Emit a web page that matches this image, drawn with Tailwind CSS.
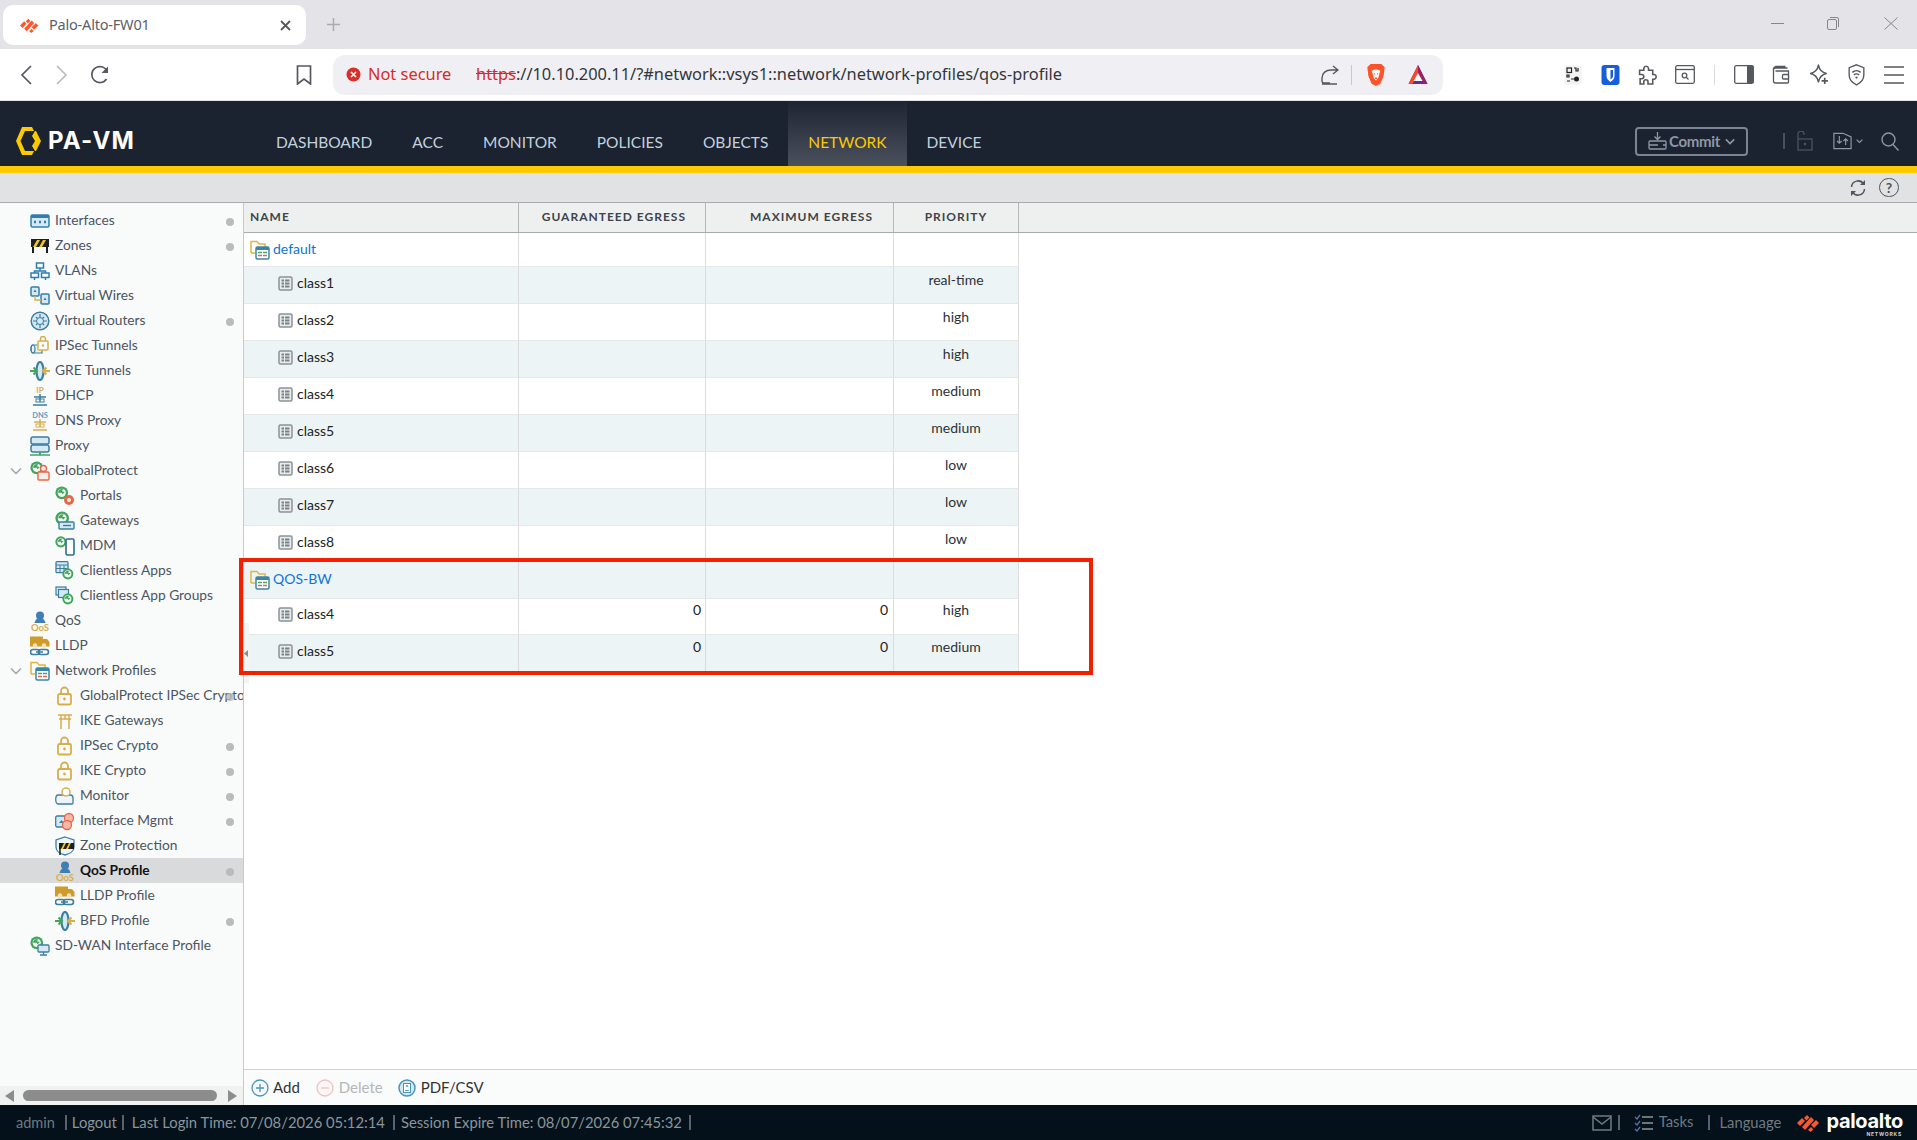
<!DOCTYPE html>
<html>
<head>
<meta charset="utf-8">
<title>Palo-Alto-FW01</title>
<script src="https://cdn.jsdelivr.net/npm/@tailwindcss/browser@4"></script>
</head>
<body class="m-0 overflow-hidden bg-white">
<svg width="0" height="0" class="absolute">
<defs>
<symbol id="pan" viewBox="0 0 24 20"><g fill="#fa582d"><path d="M0 10 5 5l3 3-5 5z"/><path d="M5 14 14 4l3 3-9 10z"/><path d="M7 5 10 2l2.500 2.500-3 3z"/><path d="M12 18l3-3 2.500 2.500-3 2.500z" transform="translate(-1 -1)"/><path d="M14 12l5-5 3 3-5 5z"/></g></symbol>
<symbol id="grid" viewBox="0 0 15 15"><rect x="1" y="1" width="13" height="13" rx="1.500" fill="#e8ecec" stroke="#8b9296" stroke-width="1.500"/><g fill="#7b8286"><rect x="3.500" y="3.500" width="2.500" height="2"/><rect x="7" y="3.500" width="4.500" height="2"/><rect x="3.500" y="6.500" width="2.500" height="2"/><rect x="7" y="6.500" width="4.500" height="2"/><rect x="3.500" y="9.500" width="2.500" height="2"/><rect x="7" y="9.500" width="4.500" height="2"/></g></symbol>
<symbol id="folder" viewBox="0 0 20 20"><path d="M1 13V1.500h6l2 2.500h6v3M1 13h4" fill="none" stroke="#e2b544" stroke-width="1.500"/><rect x="6" y="7" width="13" height="12" rx="1.500" fill="#fff" stroke="#3c85a8" stroke-width="1.500"/><rect x="6" y="7" width="13" height="3" fill="#3c85a8"/><path d="M8 12.500h4M13 12.500h4" stroke="#49a868" stroke-width="1.300"/><path d="M8 15.500h4M13 15.500h4" stroke="#e2675c" stroke-width="1.300"/></symbol>
<symbol id="lock" viewBox="0 0 20 20"><rect x="3" y="8" width="13" height="10.500" rx="1.500" fill="none" stroke="#d8ae4c" stroke-width="1.800"/><path d="M6 8V5a3.500 3.500 0 0 1 7 0v3" fill="none" stroke="#d8ae4c" stroke-width="1.800"/><circle cx="9.500" cy="13" r="1.400" fill="#d8ae4c"/></symbol>
<symbol id="globe" viewBox="0 0 20 20"><circle cx="9" cy="9" r="8.500" fill="#3fa65c"/><circle cx="9" cy="9" r="5.500" fill="#f5f7f5"/><path d="M4 9a5 5 0 0 1 7-4.500L9 7l4 1-3 3-1-2z" fill="#3fa65c"/></symbol>
<symbol id="qos" viewBox="0 0 20 20"><circle cx="10" cy="4.500" r="4" fill="#3f7fb5"/><path d="M4.500 12c1-4 3-5 5.500-5s4.500 1 5.500 5z" fill="#3f7fb5"/><text x="10" y="19.500" text-anchor="middle" font-family="Lato" font-weight="700" font-size="9.500" fill="#d8ae4c">QoS</text></symbol>
<symbol id="truck" viewBox="0 0 20 20"><rect x="0" y="0.500" width="13" height="10" fill="#cf9c2c"/><path d="M13 3h4l2.500 3v4.500H13z" fill="#cf9c2c"/><circle cx="5" cy="9.500" r="2.200" fill="#f2e3b8"/><circle cx="14" cy="9.500" r="2.200" fill="#f2e3b8"/><path d="M3 13.500h4a2 2 0 0 1 0 5H3a2 2 0 0 1 0-5zM11 13.500h5a2 2 0 0 1 0 5h-5a2 2 0 0 1 0-5zM6 16h7" fill="none" stroke="#3c7ea0" stroke-width="1.600"/></symbol>
<symbol id="gre" viewBox="0 0 20 20"><ellipse cx="10" cy="10" rx="3.500" ry="9" fill="#d5e9f4" stroke="#3c7ea0" stroke-width="2.200"/><path d="M0 10h7M3.500 6.500 7 10l-3.500 3.500" fill="none" stroke="#3fa65c" stroke-width="2"/><path d="M20 10h-7M16.500 6.500 13 10l3.500 3.500" fill="none" stroke="#d8ae4c" stroke-width="2"/></symbol>
<symbol id="chev" viewBox="0 0 12 8"><path d="M1 1.500 6 6.500l5-5" fill="none" stroke="#9aa0a4" stroke-width="1.300"/></symbol>
</defs>
</svg>

<div class="w-[1917px] h-[1140px] flex flex-col relative overflow-hidden font-['Lato',sans-serif]">

<!-- Browser tab strip -->
<div class="h-[49px] shrink-0 bg-[#e3e3e8] flex items-start pl-[3px] pt-[5px] font-['Noto_Sans',sans-serif]">
  <div class="w-[303px] h-[40px] bg-white rounded-[10px] flex items-center pl-[17px] pr-[15px] text-[#5c5f66] text-[14.500px]">
    <svg class="w-[20px] h-[17px] shrink-0"><use href="#pan"/></svg>
    <span class="ml-[9px] flex-1 tracking-[-0.2px]">Palo-Alto-FW01</span>
    <svg class="w-[11px] h-[11px]" viewBox="0 0 11 11"><path d="M1 1l9 9M10 1l-9 9" stroke="#56595e" stroke-width="1.800"/></svg>
  </div>
  <svg class="w-[13px] h-[13px] ml-[21px] mt-[13px]" viewBox="0 0 13 13"><path d="M6.500 0v13M0 6.500h13" stroke="#a9abb0" stroke-width="1.500"/></svg>
  <div class="flex-1"></div>
  <div class="flex items-center h-[36px] mr-[19px]">
    <svg class="w-[13px] h-[11px]" viewBox="0 0 13 11"><path d="M0 5.500h13" stroke="#85878c" stroke-width="1"/></svg>
    <svg class="w-[12px] h-[13px] ml-[43px]" viewBox="0 0 12 13"><rect x="0.500" y="2.500" width="9" height="10" rx="1.500" fill="none" stroke="#85878c"/><path d="M3 .5h7a1.500 1.500 0 0 1 1.500 1.500v8" fill="none" stroke="#85878c"/></svg>
    <svg class="w-[14px] h-[13px] ml-[45px]" viewBox="0 0 14 13"><path d="M.5.500l13 12M13.500.500l-13 12" stroke="#85878c" stroke-width="1"/></svg>
  </div>
</div>

<!-- Browser toolbar -->
<div class="h-[52px] shrink-0 bg-white border-b border-[#e3e3e8] flex items-center rounded-t-[6px]">
  <svg class="w-[12px] h-[20px] ml-[20px]" viewBox="0 0 12 20"><path d="M11 1 2 10l9 9" fill="none" stroke="#55585e" stroke-width="1.700"/></svg>
  <svg class="w-[12px] h-[20px] ml-[24px]" viewBox="0 0 12 20"><path d="m1 1 9 9-9 9" fill="none" stroke="#b9bbc0" stroke-width="1.700"/></svg>
  <svg class="w-[20px] h-[20px] ml-[22px]" viewBox="0 0 20 20"><path d="M16.500 14a8 8 0 1 1 .5-8" fill="none" stroke="#55585e" stroke-width="1.700"/><path d="M18 1.500V8h-6.500z" fill="#55585e"/></svg>
  <svg class="w-[16px] h-[20px] ml-[186px]" viewBox="0 0 16 20"><path d="M1.500 1h13v18L8 14l-6.500 5z" fill="none" stroke="#55585e" stroke-width="1.700"/></svg>
  <div class="w-[1110px] h-[40px] ml-[21px] bg-[#f0f0f4] rounded-[12px] flex items-center pl-[13px] font-['Noto_Sans',sans-serif]">
    <svg class="w-[15px] h-[15px] shrink-0" viewBox="0 0 15 15"><circle cx="7.500" cy="7.500" r="7" fill="#d7302b"/><path d="M5 5l5 5M10 5l-5 5" stroke="#fff" stroke-width="1.600"/></svg>
    <span class="ml-[7px] text-[16.400px] text-[#d62b26] w-[108px] shrink-0">Not secure</span>
    <span class="text-[16.400px] text-[#33363b] whitespace-nowrap"><span class="text-[#d62b26] line-through">https</span>://10.10.200.11/?#network::vsys1::network/network-profiles/qos-profile</span>
    <div class="flex-1"></div>
    <svg class="w-[18px] h-[20px]" viewBox="0 0 18 20"><path d="M9 18H3a2 2 0 0 1-2-2v-3c0-5 4-8 9-8h7M12 1l5 4-5 4M1 19h15" fill="none" stroke="#55585e" stroke-width="1.400"/></svg>
    <div class="w-px h-[20px] bg-[#c8c9cd] ml-[12px]"></div>
    <svg class="w-[20px] h-[24px] ml-[14px]" viewBox="0 0 18 22"><path d="M4 1h10l3 3-1 8-3 7-4 2-4-2-3-7-1-8z" fill="#fb542b"/><path d="M5 7l3-1h2l3 1-1 3-1 4-2 2-2-2-1-4z" fill="#fff"/><path d="M7 10h1M10 10h1M8 14h2" stroke="#fb542b" stroke-width="1.200"/></svg>
    <svg class="w-[22px] h-[20px] ml-[21px]" viewBox="0 0 19 20"><path d="M9.500 0 19 19H0z" fill="#662d91"/><path d="M9.500 0 19 19h-4L9.500 8z" fill="#9e1f63"/><path d="M9.500 0 0 19h4L9.500 8z" fill="#ff4724"/><path d="M9.500 8 14 16H5z" fill="#fff"/></svg>
    <div class="w-[14px] shrink-0"></div>
  </div>
  <svg class="w-[20px] h-[20px] ml-[120px]" viewBox="0 0 18 20"><rect x="0.500" y="0.500" width="17" height="19" rx="2" fill="#f2f2f2"/><g fill="none" stroke="#222" stroke-width="1.200"><rect x="3" y="3" width="4.500" height="4.500"/><path d="M10 3h2v3h2V3M3 10h2v2H3zM7 14h3M3 16h3"/></g><circle cx="12.500" cy="14" r="2.500" fill="#222"/></svg>
  <svg class="w-[19px] h-[20px] ml-[18px]" viewBox="0 0 18 20"><rect width="18" height="20" rx="3" fill="#175ddc"/><path d="M5 3h8v8c0 3-2 4.500-4 6-2-1.500-4-3-4-6z" fill="#fff"/><path d="M9 5h2.500v6c0 1.500-1 2.500-2.500 3.500z" fill="#175ddc"/></svg>
  <svg class="w-[20px] h-[21px] ml-[18px]" viewBox="0 0 18 20"><path d="M1 6h4V4a2.300 2.300 0 0 1 4.500 0v2h4v4h1.500a2.300 2.300 0 0 1 0 4.500h-1.500V19H9v-2a2 2 0 0 0-4 0v2H1.500v-5H3a2 2 0 0 0 0-4H1z" fill="none" stroke="#55585e" stroke-width="1.500"/></svg>
  <svg class="w-[20px] h-[19px] ml-[17px]" viewBox="0 0 20 19"><rect x="0.700" y="0.700" width="18.600" height="17.600" rx="1.500" fill="none" stroke="#55585e" stroke-width="1.300"/><path d="M.7 4.500h18.600" stroke="#55585e" stroke-width="1.300"/><circle cx="9.500" cy="10.500" r="2.300" fill="none" stroke="#55585e" stroke-width="1.300"/><path d="m11.500 12.500 2 2" stroke="#55585e" stroke-width="1.300"/></svg>
  <div class="w-px h-[20px] bg-[#dcdce0] ml-[19px]"></div>
  <svg class="w-[20px] h-[19px] ml-[19px]" viewBox="0 0 20 19"><rect x="0.700" y="0.700" width="18.600" height="17.600" rx="1.500" fill="none" stroke="#55585e" stroke-width="1.300"/><rect x="13" y="1" width="6.500" height="17" fill="#55585e"/></svg>
  <svg class="w-[20px] h-[19px] ml-[17px]" viewBox="0 0 17 19"><path d="M15 3H3a2 2 0 0 0-2 2v11a2 2 0 0 0 2 2h12a1 1 0 0 0 1-1V6H3M1 5a3 3 0 0 1 2-3.500h10" fill="none" stroke="#55585e" stroke-width="1.300"/><rect x="10" y="9.500" width="6" height="4.500" rx="1" fill="#fff" stroke="#55585e" stroke-width="1.300"/></svg>
  <svg class="w-[21px] h-[21px] ml-[18px]" viewBox="0 0 18 20"><path d="M8 1c1 5 3 7 7.500 8C11 10 9 12 8 17 7 12 5 10 .5 9 5 8 7 6 8 1z" fill="none" stroke="#55585e" stroke-width="1.400" stroke-linejoin="round"/><path d="M14 13v6M11 16h6" stroke="#55585e" stroke-width="1.600"/></svg>
  <svg class="w-[19px] h-[22px] ml-[17px]" viewBox="0 0 16 21"><path d="M8 .8 15 3.500v7c0 4.500-3 7.500-7 9.500-4-2-7-5-7-9.500v-7z" fill="none" stroke="#55585e" stroke-width="1.300"/><path d="M4 8a6 6 0 0 1 8 0M5.500 10.500a3.500 3.500 0 0 1 5 0" fill="none" stroke="#55585e" stroke-width="1.300"/><circle cx="8" cy="13" r="1.100" fill="#55585e"/></svg>
  <svg class="w-[20px] h-[18px] ml-[18px]" viewBox="0 0 20 18"><path d="M0 1h20M0 9h20M0 17h20" stroke="#55585e" stroke-width="1.300"/></svg>
</div>

<!-- App header -->
<div class="h-[65px] shrink-0 bg-[#1b2230] flex items-center pl-[16px] relative">
  <svg class="w-[25px] h-[28px] mt-[14px]" viewBox="0 0 25 28"><path d="M6 0h10l2 4H9L4.500 14 9 24h9l-2 4H6L0 14z" fill="#fdc900"/><path d="M19 4h1l5 10-5 10h-1l-3-5 3-5-3-5z" fill="#fdc900"/></svg>
  <span class="ml-[7px] mt-[14px] w-[208px] shrink-0 text-white font-['Inter',sans-serif] font-bold text-[24px] tracking-[1.200px] leading-none">PA-VM</span>
  <div class="flex h-full text-[15.500px] text-[#c2d1de] items-stretch">
    <div class="px-[20px] flex items-center pt-[18px]">DASHBOARD</div>
    <div class="px-[20px] flex items-center pt-[18px]">ACC</div>
    <div class="px-[20px] flex items-center pt-[18px]">MONITOR</div>
    <div class="px-[20px] flex items-center pt-[18px]">POLICIES</div>
    <div class="px-[20px] flex items-center pt-[18px]">OBJECTS</div>
    <div class="px-[20px] flex items-center pt-[18px] bg-linear-to-b from-[#1e2532] to-[#4b525d] text-[#fdc900]">NETWORK</div>
    <div class="px-[20px] flex items-center pt-[18px]">DEVICE</div>
  </div>
  <div class="flex-1"></div>
  <div class="flex items-center mt-[15px] pr-[17px]">
    <div class="w-[113px] h-[29px] border-2 border-[#7a8494] rounded-[4px] flex items-center justify-center text-[#8d98a7] font-bold text-[15px]">
      <svg class="w-[19px] h-[18px]" viewBox="0 0 19 18"><path d="M9.500 0v7M6.500 4.500l3 3 3-3" fill="none" stroke="#8d98a7" stroke-width="1.300"/><rect x="1" y="9" width="17" height="8" rx="1" fill="none" stroke="#8d98a7" stroke-width="1.300"/><path d="M1 13h9M15 13h3" stroke="#8d98a7" stroke-width="1.300"/></svg>
      <span class="ml-[2px] tracking-[-0.3px]">Commit</span>
      <svg class="w-[10px] h-[7px] ml-[5px]" viewBox="0 0 12 8"><path d="M1 1.500 6 6.500l5-5" fill="none" stroke="#8d98a7" stroke-width="2"/></svg>
    </div>
    <div class="w-[2px] h-[16px] bg-[#48505e] ml-[35px]"></div>
    <svg class="w-[20px] h-[20px] ml-[10px]" viewBox="0 0 16 20"><rect x="1" y="8" width="14" height="11" fill="none" stroke="#4a5361" stroke-width="1.300"/><path d="M1 8V3a3 3 0 0 1 6 0v1" fill="none" stroke="#4a5361" stroke-width="1.300"/><circle cx="8" cy="13" r="1.300" fill="#4a5361"/></svg>
    <svg class="w-[19px] h-[18px] ml-[18px]" viewBox="0 0 21 19"><path d="M1 1h10l9 4v13H1z" fill="none" stroke="#8d98a7" stroke-width="1.300"/><path d="M7 4v8M4.500 9.500 7 12l2.500-2.500M14 14V7M11.500 9.500 14 7l2.500 2.500" fill="none" stroke="#8d98a7" stroke-width="1.300"/></svg>
    <svg class="w-[7px] h-[6px] ml-[4px]" viewBox="0 0 12 8"><path d="M1 1.500 6 6.500l5-5" fill="none" stroke="#8d98a7" stroke-width="2"/></svg>
    <svg class="w-[20px] h-[19px] ml-[17px]" viewBox="0 0 18 19"><circle cx="7.500" cy="7.500" r="6.500" fill="none" stroke="#8d98a7" stroke-width="1.400"/><path d="m12 12.500 5.500 6" stroke="#8d98a7" stroke-width="1.400"/></svg>
  </div>
</div>
<div class="h-[7px] shrink-0 bg-[#fdc900]"></div>

<!-- Sub bar -->
<div class="h-[30px] shrink-0 bg-[#e1e2e4] border-b border-[#a9abad] flex items-center justify-end pr-[18px]">
  <svg class="w-[18px] h-[18px]" viewBox="0 0 17 18"><path d="M2 8a6.500 6.500 0 0 1 12-3M15 10A6.500 6.500 0 0 1 3 13" fill="none" stroke="#4f5458" stroke-width="1.500"/><path d="M15.500 1v5h-5zM1.500 17v-5h5z" fill="#4f5458"/></svg>
  <div class="w-[20px] h-[19px] ml-[12px] rounded-full border-[1.500px] border-[#4f5458] flex items-center justify-center text-[14px] font-bold text-[#4f5458]">?</div>
</div>

<!-- Main -->
<div class="flex-1 flex min-h-0">
  <!-- Sidebar -->
  <div class="w-[244px] shrink-0 bg-[#f9fafa] border-r border-[#c9cbcc] flex flex-col">
    <div class="flex-1 pt-[5px] text-[13.750px] text-[#4b5563] overflow-hidden">
      <div class="h-[25px] flex items-center pl-[30px] relative"><svg class="w-[20px] h-[15px]" viewBox="0 0 20 15"><rect x="1" y="2" width="18" height="12" rx="1.500" fill="#d5e9f4" stroke="#2f7fae" stroke-width="1.500"/><rect x="1" y="2" width="18" height="3" fill="#2f7fae"/><path d="M4 9h2M9 9h2M14 9h2" stroke="#2f7fae" stroke-width="2.500"/></svg><span class="ml-[5px]">Interfaces</span><i class="absolute right-[9px] top-[10px] w-[8px] h-[8px] rounded-full bg-[#b9bbbc]"></i></div>
      <div class="h-[25px] flex items-center pl-[30px] relative"><svg class="w-[20px] h-[15px]" viewBox="0 0 20 15"><path d="M1 1h18v8H1z" fill="#1e1e1e"/><path d="M3 9 7 2h3L6 9zM9 9l4-7h3l-4 7z" fill="#f2c81e"/><path d="M3 9v6M17 9v6" stroke="#1e1e1e" stroke-width="2"/></svg><span class="ml-[5px]">Zones</span><i class="absolute right-[9px] top-[10px] w-[8px] h-[8px] rounded-full bg-[#b9bbbc]"></i></div>
      <div class="h-[25px] flex items-center pl-[30px]"><svg class="w-[20px] h-[18px]" viewBox="0 0 20 18"><g fill="none" stroke="#2f7fae" stroke-width="1.500"><rect x="6.500" y="1" width="7" height="5"/><rect x="1" y="11" width="7.500" height="4.500"/><rect x="11.500" y="11" width="7.500" height="4.500"/><path d="M10 6v3M4.500 11V9h11v2M4.500 15.500V18M15.500 15.500V18"/></g></svg><span class="ml-[5px]">VLANs</span></div>
      <div class="h-[25px] flex items-center pl-[30px]"><svg class="w-[20px] h-[19px]" viewBox="0 0 20 19"><rect x="1" y="1" width="8" height="9" rx="1" fill="#d5e9f4" stroke="#2f7fae" stroke-width="1.500"/><rect x="11" y="8" width="8" height="10" rx="1" fill="#d5e9f4" stroke="#2f7fae" stroke-width="1.500"/><path d="M5 10v4h6" fill="none" stroke="#d8ae4c" stroke-width="1.300"/><path d="M3.500 6 5 3.500 6.500 6zM13.500 14l1.500-2.500 1.500 2.500z" fill="#2f7fae"/></svg><span class="ml-[5px]">Virtual Wires</span></div>
      <div class="h-[25px] flex items-center pl-[30px] relative"><svg class="w-[20px] h-[20px]" viewBox="0 0 20 20"><circle cx="10" cy="10" r="8.800" fill="#d5e9f4" stroke="#3c7ea0" stroke-width="1.500"/><path d="M10 3v14M3 10h14M6 6l8 8M14 6l-8 8" stroke="#3c7ea0" stroke-width="1.200"/><circle cx="10" cy="10" r="3.500" fill="#d5e9f4" stroke="#3c7ea0"/></svg><span class="ml-[5px]">Virtual Routers</span><i class="absolute right-[9px] top-[10px] w-[8px] h-[8px] rounded-full bg-[#b9bbbc]"></i></div>
      <div class="h-[25px] flex items-center pl-[30px]"><svg class="w-[20px] h-[19px]" viewBox="0 0 20 19"><path d="M3 9h9v8H3a2 4 0 0 1 0-8z" fill="#e9f2f6" stroke="#3c7ea0" stroke-width="1.200"/><ellipse cx="3" cy="13" rx="2" ry="4" fill="none" stroke="#3c7ea0" stroke-width="1.200"/><rect x="8" y="5" width="10" height="9" rx="1" fill="#fff" stroke="#d8ae4c" stroke-width="1.500"/><path d="M10.500 5V3a2.500 2.500 0 0 1 5 0v2" fill="none" stroke="#d8ae4c" stroke-width="1.500"/><circle cx="13" cy="9.500" r="1.200" fill="#d8ae4c"/></svg><span class="ml-[5px]">IPSec Tunnels</span></div>
      <div class="h-[25px] flex items-center pl-[30px]"><svg class="w-[20px] h-[20px]"><use href="#gre"/></svg><span class="ml-[5px]">GRE Tunnels</span></div>
      <div class="h-[25px] flex items-center pl-[30px]"><svg class="w-[20px] h-[20px]" viewBox="0 0 20 20"><text x="10" y="7" text-anchor="middle" font-family="Lato" font-weight="700" font-size="8" fill="#d8ae4c">IP</text><path d="M10 8v8M4 11h12M3 19h14" stroke="#3c7ea0" stroke-width="1.500"/><rect x="6" y="13" width="8" height="3" fill="none" stroke="#3c7ea0"/></svg><span class="ml-[5px]">DHCP</span></div>
      <div class="h-[25px] flex items-center pl-[30px]"><svg class="w-[20px] h-[20px]" viewBox="0 0 20 20"><text x="10" y="7" text-anchor="middle" font-family="Lato" font-weight="700" font-size="7.500" fill="#5b9fca">DNS</text><path d="M10 8v8M4 11h12M3 19h14" stroke="#d8ae4c" stroke-width="1.500"/><rect x="6" y="13" width="8" height="3" fill="none" stroke="#d8ae4c"/></svg><span class="ml-[5px]">DNS Proxy</span></div>
      <div class="h-[25px] flex items-center pl-[30px]"><svg class="w-[20px] h-[20px]" viewBox="0 0 20 20"><rect x="1" y="1" width="18" height="7" rx="2" fill="#d5e9f4" stroke="#3c7ea0" stroke-width="1.500"/><rect x="1" y="9" width="18" height="7" rx="2" fill="#d5e9f4" stroke="#3c7ea0" stroke-width="1.500"/><path d="M0 19h20" stroke="#3fa65c" stroke-width="1.500"/><path d="M10 16v3" stroke="#3fa65c" stroke-width="2"/></svg><span class="ml-[5px]">Proxy</span></div>
      <div class="h-[25px] flex items-center pl-[10px]"><svg class="w-[12px] h-[8px]"><use href="#chev"/></svg><svg class="w-[20px] h-[20px] ml-[8px]" viewBox="0 0 20 20"><use href="#globe" width="15" height="15"/><rect x="8" y="11" width="11" height="8" rx="1" fill="#fbeee8" stroke="#e8674b" stroke-width="1.400"/><circle cx="13.500" cy="7.500" r="3" fill="#fbeee8" stroke="#e8674b" stroke-width="1.400"/></svg><span class="ml-[5px]">GlobalProtect</span></div>
      <div class="h-[25px] flex items-center pl-[55px]"><svg class="w-[20px] h-[20px]" viewBox="0 0 20 20"><use href="#globe" width="15" height="15"/><circle cx="14" cy="14" r="5" fill="#e8674b"/><circle cx="14" cy="14" r="2" fill="#fbeee8"/></svg><span class="ml-[5px]">Portals</span></div>
      <div class="h-[25px] flex items-center pl-[55px]"><svg class="w-[20px] h-[20px]" viewBox="0 0 20 20"><use href="#globe" width="16" height="16"/><rect x="4" y="11" width="15" height="7" rx="1" fill="#d5e9f4" stroke="#3c7ea0" stroke-width="1.400"/><path d="M8 14.500h8" stroke="#3c7ea0" stroke-width="1.400"/></svg><span class="ml-[5px]">Gateways</span></div>
      <div class="h-[25px] flex items-center pl-[55px]"><svg class="w-[20px] h-[20px]" viewBox="0 0 20 20"><use href="#globe" width="13" height="13"/><rect x="11" y="3" width="8" height="16" rx="1.500" fill="#fff" stroke="#2a6d94" stroke-width="1.600"/></svg><span class="ml-[5px]">MDM</span></div>
      <div class="h-[25px] flex items-center pl-[55px]"><svg class="w-[20px] h-[20px]" viewBox="0 0 20 20"><rect x="1" y="0.700" width="12" height="11" rx="1" fill="#d5e9f4" stroke="#3c7ea0" stroke-width="1.300"/><path d="M1 4h12M5 4v7M9 4v7M1 7.500h12" stroke="#3c7ea0"/><use href="#globe" x="7" y="7" width="13" height="13"/></svg><span class="ml-[5px]">Clientless Apps</span></div>
      <div class="h-[25px] flex items-center pl-[55px]"><svg class="w-[20px] h-[20px]" viewBox="0 0 20 20"><rect x="1" y="1" width="10" height="8" fill="#d5e9f4" stroke="#3c7ea0" stroke-width="1.200"/><rect x="3.500" y="3.500" width="10" height="8" fill="#d5e9f4" stroke="#3c7ea0" stroke-width="1.200"/><use href="#globe" x="7" y="7" width="13" height="13"/></svg><span class="ml-[5px]">Clientless App Groups</span></div>
      <div class="h-[25px] flex items-center pl-[30px]"><svg class="w-[20px] h-[20px]"><use href="#qos"/></svg><span class="ml-[5px]">QoS</span></div>
      <div class="h-[25px] flex items-center pl-[30px]"><svg class="w-[20px] h-[20px]"><use href="#truck"/></svg><span class="ml-[5px]">LLDP</span></div>
      <div class="h-[25px] flex items-center pl-[10px]"><svg class="w-[12px] h-[8px]"><use href="#chev"/></svg><svg class="w-[20px] h-[20px] ml-[8px]"><use href="#folder"/></svg><span class="ml-[5px]">Network Profiles</span></div>
      <div class="h-[25px] flex items-center pl-[55px] relative whitespace-nowrap overflow-hidden"><svg class="w-[20px] h-[20px] shrink-0"><use href="#lock"/></svg><span class="ml-[5px]">GlobalProtect IPSec Crypto</span><i class="absolute right-[9px] top-[10px] w-[8px] h-[8px] rounded-full bg-[#b9bbbc]/80"></i></div>
      <div class="h-[25px] flex items-center pl-[55px]"><svg class="w-[20px] h-[20px]" viewBox="0 0 20 20"><path d="M3 4h14M4 8h12M6 4v14M14 4v14M10 4v4" fill="none" stroke="#d8ae4c" stroke-width="1.500"/></svg><span class="ml-[5px]">IKE Gateways</span></div>
      <div class="h-[25px] flex items-center pl-[55px] relative"><svg class="w-[20px] h-[20px]"><use href="#lock"/></svg><span class="ml-[5px]">IPSec Crypto</span><i class="absolute right-[9px] top-[10px] w-[8px] h-[8px] rounded-full bg-[#b9bbbc]"></i></div>
      <div class="h-[25px] flex items-center pl-[55px] relative"><svg class="w-[20px] h-[20px]"><use href="#lock"/></svg><span class="ml-[5px]">IKE Crypto</span><i class="absolute right-[9px] top-[10px] w-[8px] h-[8px] rounded-full bg-[#b9bbbc]"></i></div>
      <div class="h-[25px] flex items-center pl-[55px] relative"><svg class="w-[20px] h-[20px]" viewBox="0 0 20 20"><path d="M3 9h12a3 3 0 0 1 3 3v5a1 1 0 0 1-1 1H3a2 4 0 0 1 0-9z" fill="#eef5f8" stroke="#3c7ea0" stroke-width="1.300"/><circle cx="11" cy="6" r="4" fill="#fff" stroke="#d8ae4c" stroke-width="1.500"/></svg><span class="ml-[5px]">Monitor</span><i class="absolute right-[9px] top-[10px] w-[8px] h-[8px] rounded-full bg-[#b9bbbc]"></i></div>
      <div class="h-[25px] flex items-center pl-[55px] relative"><svg class="w-[20px] h-[20px]" viewBox="0 0 20 20"><rect x="0.700" y="5" width="12" height="11" rx="1.500" fill="#d5e9f4" stroke="#3c7ea0" stroke-width="1.300"/><path d="M4 12l2.500-3L9 12z" fill="#3c7ea0"/><circle cx="14" cy="7" r="4.500" fill="#f4b9a6" stroke="#e8674b" stroke-width="1.300"/><circle cx="12" cy="14" r="4.500" fill="#f4b9a6" stroke="#e8674b" stroke-width="1.300"/></svg><span class="ml-[5px]">Interface Mgmt</span><i class="absolute right-[9px] top-[10px] w-[8px] h-[8px] rounded-full bg-[#b9bbbc]"></i></div>
      <div class="h-[25px] flex items-center pl-[55px]"><svg class="w-[20px] h-[20px]" viewBox="0 0 20 20"><path d="M10 1 19 4v7c0 4-4 7-9 8-5-1-9-4-9-8V4z" fill="#eef5f8" stroke="#3c7ea0" stroke-width="1.300"/><path d="M4 7h15v6H4z" fill="#1e1e1e"/><path d="M6 13l3-6h2l-3 6zM11 13l3-6h2l-3 6z" fill="#f2c81e"/><path d="M5 13v6" stroke="#1e1e1e" stroke-width="1.500"/></svg><span class="ml-[5px]">Zone Protection</span></div>
      <div class="h-[25px] flex items-center pl-[55px] relative bg-[#d9dadc] text-[#111] font-bold"><svg class="w-[20px] h-[20px]"><use href="#qos"/></svg><span class="ml-[5px]">QoS Profile</span><i class="absolute right-[9px] top-[10px] w-[8px] h-[8px] rounded-full bg-[#b9bbbc]"></i></div>
      <div class="h-[25px] flex items-center pl-[55px]"><svg class="w-[20px] h-[20px]"><use href="#truck"/></svg><span class="ml-[5px]">LLDP Profile</span></div>
      <div class="h-[25px] flex items-center pl-[55px] relative"><svg class="w-[20px] h-[20px]"><use href="#gre"/></svg><span class="ml-[5px]">BFD Profile</span><i class="absolute right-[9px] top-[10px] w-[8px] h-[8px] rounded-full bg-[#b9bbbc]"></i></div>
      <div class="h-[25px] flex items-center pl-[30px]"><svg class="w-[20px] h-[20px]" viewBox="0 0 20 20"><use href="#globe" width="15" height="15"/><rect x="8" y="9" width="11" height="7" rx="1" fill="#d5e9f4" stroke="#3c7ea0" stroke-width="1.300"/><path d="M13.500 16v3M10 19h7" stroke="#3c7ea0" stroke-width="1.300"/></svg><span class="ml-[5px]">SD-WAN Interface Profile</span></div>
    </div>
    <div class="h-[19px] shrink-0 bg-[#f0f1f1] flex items-center pl-[5px]">
      <svg class="w-[9px] h-[12px]" viewBox="0 0 9 12"><path d="M9 0v12L0 6z" fill="#8c8c8c"/></svg>
      <div class="w-[194px] h-[11px] ml-[9px] rounded-full bg-[#8c8c8c]"></div>
      <svg class="w-[9px] h-[12px] ml-[11px]" viewBox="0 0 9 12"><path d="M0 0v12l9-6z" fill="#8c8c8c"/></svg>
    </div>
  </div>

  <!-- Content -->
  <div class="flex-1 flex flex-col min-w-0 relative">
    <div class="h-[30px] shrink-0 bg-[#eef0f0] border-b border-[#a9abad] flex">
      <div class="w-[775px] grid grid-cols-[275px_187px_188px_125px] text-[12px] font-bold tracking-[1px] text-[#3f4448]">
        <div class="border-r border-[#b4b6b8] flex items-center pl-[6px] pb-[2px] h-full">NAME</div>
        <div class="border-r border-[#b4b6b8] flex items-center justify-end pr-[19px] pb-[2px] h-full">GUARANTEED EGRESS</div>
        <div class="border-r border-[#b4b6b8] flex items-center justify-end pr-[20px] pb-[2px] h-full">MAXIMUM EGRESS</div>
        <div class="border-r border-[#b4b6b8] flex items-center justify-center pb-[2px] h-full">PRIORITY</div>
      </div>
    </div>
    <div class="flex-1 bg-white text-[14px] text-[#222]">
      <div class="w-[775px] grid grid-cols-[275px_187px_188px_125px] grid-rows-[33px_repeat(8,37px)_36px_36px_37px]">
        <!-- default -->
        <div class="flex items-center pl-[6px] pb-[2px] border-r border-[#dcdcdc]"><svg class="w-[20px] h-[20px] mt-[2px]"><use href="#folder"/></svg><a class="ml-[3px] text-[#0f74d6]">default</a></div><div class="border-r border-[#dcdcdc]"></div><div class="border-r border-[#dcdcdc]"></div><div class="border-r border-[#dcdcdc]"></div>
        <!-- class rows -->
        <div class="bg-[#edf4f6] border-t border-[#e6e8e8] border-r border-r-[#dcdcdc] flex items-center pl-[34px] pb-[6px]"><svg class="w-[15px] h-[15px] mt-[2px]"><use href="#grid"/></svg><span class="ml-[4px]">class1</span></div><div class="bg-[#edf4f6] border-t border-[#e6e8e8] border-r border-r-[#dcdcdc]"></div><div class="bg-[#edf4f6] border-t border-[#e6e8e8] border-r border-r-[#dcdcdc]"></div><div class="bg-[#edf4f6] border-t border-[#e6e8e8] border-r border-r-[#dcdcdc] text-center pt-[2px] text-[#2a3338]">real-time</div>
        <div class="border-t border-[#e6e8e8] border-r border-r-[#dcdcdc] flex items-center pl-[34px] pb-[6px]"><svg class="w-[15px] h-[15px] mt-[2px]"><use href="#grid"/></svg><span class="ml-[4px]">class2</span></div><div class="border-t border-[#e6e8e8] border-r border-r-[#dcdcdc]"></div><div class="border-t border-[#e6e8e8] border-r border-r-[#dcdcdc]"></div><div class="border-t border-[#e6e8e8] border-r border-r-[#dcdcdc] text-center pt-[2px] text-[#2a3338]">high</div>
        <div class="bg-[#edf4f6] border-t border-[#e6e8e8] border-r border-r-[#dcdcdc] flex items-center pl-[34px] pb-[6px]"><svg class="w-[15px] h-[15px] mt-[2px]"><use href="#grid"/></svg><span class="ml-[4px]">class3</span></div><div class="bg-[#edf4f6] border-t border-[#e6e8e8] border-r border-r-[#dcdcdc]"></div><div class="bg-[#edf4f6] border-t border-[#e6e8e8] border-r border-r-[#dcdcdc]"></div><div class="bg-[#edf4f6] border-t border-[#e6e8e8] border-r border-r-[#dcdcdc] text-center pt-[2px] text-[#2a3338]">high</div>
        <div class="border-t border-[#e6e8e8] border-r border-r-[#dcdcdc] flex items-center pl-[34px] pb-[6px]"><svg class="w-[15px] h-[15px] mt-[2px]"><use href="#grid"/></svg><span class="ml-[4px]">class4</span></div><div class="border-t border-[#e6e8e8] border-r border-r-[#dcdcdc]"></div><div class="border-t border-[#e6e8e8] border-r border-r-[#dcdcdc]"></div><div class="border-t border-[#e6e8e8] border-r border-r-[#dcdcdc] text-center pt-[2px] text-[#2a3338]">medium</div>
        <div class="bg-[#edf4f6] border-t border-[#e6e8e8] border-r border-r-[#dcdcdc] flex items-center pl-[34px] pb-[6px]"><svg class="w-[15px] h-[15px] mt-[2px]"><use href="#grid"/></svg><span class="ml-[4px]">class5</span></div><div class="bg-[#edf4f6] border-t border-[#e6e8e8] border-r border-r-[#dcdcdc]"></div><div class="bg-[#edf4f6] border-t border-[#e6e8e8] border-r border-r-[#dcdcdc]"></div><div class="bg-[#edf4f6] border-t border-[#e6e8e8] border-r border-r-[#dcdcdc] text-center pt-[2px] text-[#2a3338]">medium</div>
        <div class="border-t border-[#e6e8e8] border-r border-r-[#dcdcdc] flex items-center pl-[34px] pb-[6px]"><svg class="w-[15px] h-[15px] mt-[2px]"><use href="#grid"/></svg><span class="ml-[4px]">class6</span></div><div class="border-t border-[#e6e8e8] border-r border-r-[#dcdcdc]"></div><div class="border-t border-[#e6e8e8] border-r border-r-[#dcdcdc]"></div><div class="border-t border-[#e6e8e8] border-r border-r-[#dcdcdc] text-center pt-[2px] text-[#2a3338]">low</div>
        <div class="bg-[#edf4f6] border-t border-[#e6e8e8] border-r border-r-[#dcdcdc] flex items-center pl-[34px] pb-[6px]"><svg class="w-[15px] h-[15px] mt-[2px]"><use href="#grid"/></svg><span class="ml-[4px]">class7</span></div><div class="bg-[#edf4f6] border-t border-[#e6e8e8] border-r border-r-[#dcdcdc]"></div><div class="bg-[#edf4f6] border-t border-[#e6e8e8] border-r border-r-[#dcdcdc]"></div><div class="bg-[#edf4f6] border-t border-[#e6e8e8] border-r border-r-[#dcdcdc] text-center pt-[2px] text-[#2a3338]">low</div>
        <div class="border-t border-[#e6e8e8] border-r border-r-[#dcdcdc] flex items-center pl-[34px] pb-[6px]"><svg class="w-[15px] h-[15px] mt-[2px]"><use href="#grid"/></svg><span class="ml-[4px]">class8</span></div><div class="border-t border-[#e6e8e8] border-r border-r-[#dcdcdc]"></div><div class="border-t border-[#e6e8e8] border-r border-r-[#dcdcdc]"></div><div class="border-t border-[#e6e8e8] border-r border-r-[#dcdcdc] text-center pt-[2px] text-[#2a3338]">low</div>
        <!-- QOS-BW -->
        <div class="bg-[#edf4f6] flex items-center pl-[6px] pb-[3px] border-r border-[#dcdcdc]"><svg class="w-[20px] h-[20px] mt-[2px]"><use href="#folder"/></svg><a class="ml-[3px] text-[#0f74d6]">QOS-BW</a></div><div class="bg-[#edf4f6] border-r border-[#dcdcdc]"></div><div class="bg-[#edf4f6] border-r border-[#dcdcdc]"></div><div class="bg-[#edf4f6] border-r border-[#dcdcdc]"></div>
        <div class="border-t border-[#e6e8e8] border-r border-r-[#dcdcdc] flex items-center pl-[34px] pb-[6px]"><svg class="w-[15px] h-[15px] mt-[2px]"><use href="#grid"/></svg><span class="ml-[4px]">class4</span></div><div class="border-t border-[#e6e8e8] border-r border-r-[#dcdcdc] text-right pr-[4px]">0</div><div class="border-t border-[#e6e8e8] border-r border-r-[#dcdcdc] text-right pr-[5px]">0</div><div class="border-t border-[#e6e8e8] border-r border-r-[#dcdcdc] text-center text-[#2a3338]">high</div>
        <div class="bg-[#edf4f6] border-t border-[#e6e8e8] border-r border-r-[#dcdcdc] flex items-center pl-[34px] pb-[5px]"><svg class="w-[15px] h-[15px] mt-[2px]"><use href="#grid"/></svg><span class="ml-[4px]">class5</span></div><div class="bg-[#edf4f6] border-t border-[#e6e8e8] border-r border-r-[#dcdcdc] text-right pr-[4px] pt-[1px]">0</div><div class="bg-[#edf4f6] border-t border-[#e6e8e8] border-r border-r-[#dcdcdc] text-right pr-[5px] pt-[1px]">0</div><div class="bg-[#edf4f6] border-t border-[#e6e8e8] border-r border-r-[#dcdcdc] text-center pt-[1px] text-[#2a3338]">medium</div>
      </div>
    </div>
    <!-- Action bar -->
    <div class="h-[36px] shrink-0 bg-[#fafbfb] border-t border-[#d0d2d3] flex items-center pl-[7px] text-[15px] text-[#333]">
      <svg class="w-[18px] h-[18px]" viewBox="0 0 18 18"><circle cx="9" cy="9" r="8" fill="#f3f8fb" stroke="#4e93b8" stroke-width="1.300"/><path d="M9 5v8M5 9h8" stroke="#4e93b8" stroke-width="1.300"/></svg>
      <span class="ml-[4px]">Add</span>
      <svg class="w-[18px] h-[18px] ml-[16px]" viewBox="0 0 18 18"><circle cx="9" cy="9" r="8" fill="#fdf6f5" stroke="#eec4bf" stroke-width="1.300"/><path d="M5 9h8" stroke="#eec4bf" stroke-width="1.300"/></svg>
      <span class="ml-[5px] text-[#b4b7b9]">Delete</span>
      <svg class="w-[18px] h-[18px] ml-[15px]" viewBox="0 0 18 18"><circle cx="9" cy="9" r="8" fill="#d5e9f4" stroke="#4e93b8" stroke-width="1.500"/><rect x="5.500" y="4.500" width="7" height="9" fill="#fff" stroke="#4e93b8"/><path d="M7 11.500h4M8 8l1-2 1 2" fill="none" stroke="#4e93b8" stroke-width=".9"/></svg>
      <span class="ml-[5px]">PDF/CSV</span>
    </div>
    <!-- Collapse handle -->
    <div class="absolute left-0 top-[420px] w-[5px] h-[60px] bg-[#f3f4f4] flex items-center">
      <svg class="w-[4px] h-[7px]" viewBox="0 0 4 7"><path d="M4 0v7L0 3.500z" fill="#8c8c8c"/></svg>
    </div>
    <!-- Red highlight -->
    <div class="absolute left-[-5px] top-[355px] w-[854px] h-[117px] border-[4px] border-[#f02000]"></div>
  </div>
</div>

<!-- Status bar -->
<div class="h-[35px] shrink-0 bg-[#04111a] flex items-center pl-[16px] text-[14.800px] text-[#8b959c] whitespace-nowrap">
  <span class="text-[14.500px] text-[#6f7a82]">admin</span>
  <i class="w-[2px] h-[15px] bg-[#59636b] ml-[10px]"></i><span class="ml-[5px]">Logout</span>
  <i class="w-[2px] h-[15px] bg-[#59636b] ml-[5px]"></i><span class="ml-[8px]">Last Login Time: 07/08/2026 05:12:14</span>
  <i class="w-[2px] h-[15px] bg-[#59636b] ml-[8px]"></i><span class="ml-[6px]">Session Expire Time: 08/07/2026 07:45:32</span>
  <i class="w-[2px] h-[15px] bg-[#59636b] ml-[7px]"></i>
  <div class="flex-1"></div>
  <svg class="w-[20px] h-[16px]" viewBox="0 0 20 16"><rect x="1" y="1" width="18" height="14" fill="none" stroke="#6f7a82" stroke-width="1.500"/><path d="m1 2 9 7 9-7" fill="none" stroke="#6f7a82" stroke-width="1.500"/></svg>
  <i class="w-[2px] h-[15px] bg-[#59636b] ml-[6px]"></i>
  <svg class="w-[20px] h-[18px] ml-[14px]" viewBox="0 0 20 18"><path d="M1 3l2 2 3-4M1 9l2 2 3-4M1 15l2 2 3-4" fill="none" stroke="#5a6fae" stroke-width="1.300"/><path d="M8 3h11M8 9h11M8 15h11" stroke="#8b959c" stroke-width="1.300"/></svg>
  <span class="ml-[5px] -mt-[3px] text-[#6f7a82]">Tasks</span>
  <i class="w-[2px] h-[15px] bg-[#59636b] ml-[15px]"></i>
  <span class="ml-[9px] text-[#6f7a82]">Language</span>
  <svg class="w-[26px] h-[20px] ml-[15px]"><use href="#pan"/></svg>
  <span class="ml-[4px] text-white font-['Inter',sans-serif] font-bold text-[20px] leading-[20px] tracking-[-0.3px] relative -top-[2px]">paloalto<span class="absolute right-[1px] top-[21px] text-[5px] leading-[5px] tracking-[0.8px] font-bold text-[#d0d4d6]">NETWORKS</span></span>
  <div class="w-[14px] shrink-0"></div>
</div>
</div>
</body>
</html>
